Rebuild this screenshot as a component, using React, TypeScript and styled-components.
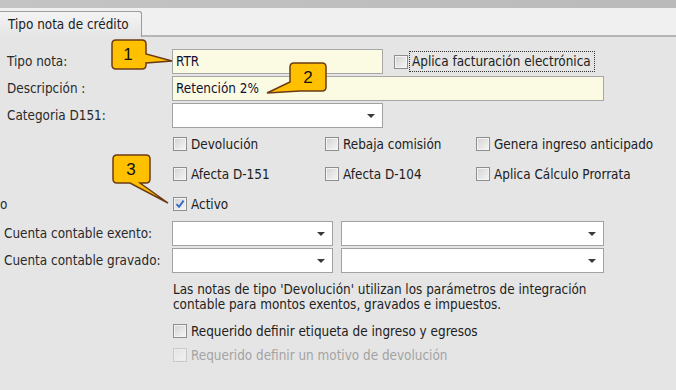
import styled, { createGlobalStyle } from 'styled-components';

const GlobalStyle = createGlobalStyle`
  html, body {
    margin: 0;
    padding: 0;
    background: #e5e5e5;
    overflow: hidden;
  }
  body {
    font-family: Tahoma, "DejaVu Sans", sans-serif;
    font-stretch: condensed;
    font-size: 13.4px;
    color: #1f1f1f;
  }
`;

export default function App() {
  return (
    <>
      <GlobalStyle />
      <Window>
        <TitleStrip />
        <TabStrip>
          <Tab>Tipo nota de crédito</Tab>
        </TabStrip>
        <Panel>
          <Row $h={25}>
            <Label>Tipo nota:</Label>
            <TextInput $w={211}>RTR</TextInput>
            <Check $ml={11}>
              <Box />
              <FocusText>Aplica facturación electrónica</FocusText>
            </Check>
          </Row>
          <Row $h={25} $mt={2}>
            <Label>Descripción :</Label>
            <TextInput $w={432}>Retención 2%</TextInput>
          </Row>
          <Row $h={25} $mt={2}>
            <Label>Categoria D151:</Label>
            <Combo $w={211} />
          </Row>

          <CheckGrid>
            <Check>
              <Box />
              Devolución
            </Check>
            <Check>
              <Box />
              Rebaja comisión
            </Check>
            <Check>
              <Box />
              Genera ingreso anticipado
            </Check>
            <Check>
              <Box />
              Afecta D-151
            </Check>
            <Check>
              <Box />
              Afecta D-104
            </Check>
            <Check>
              <Box />
              Aplica Cálculo Prorrata
            </Check>
          </CheckGrid>

          <Row $h={30}>
            <Label $pl={0}>o</Label>
            <Check $ml={1}>
              <Box $checked>
                <svg width="10" height="10" viewBox="0 0 10 10">
                  <path d="M1.5 5.2 L4 7.8 L8.6 1.6" fill="none" stroke="#2f68c4" strokeWidth="1.8" />
                </svg>
              </Box>
              Activo
            </Check>
          </Row>

          <Row $h={25} $mt={2}>
            <Label $pl={4}>Cuenta contable exento:</Label>
            <Combo $w={161} />
            <Combo $w={263} $ml={8} />
          </Row>
          <Row $h={25} $mt={2}>
            <Label $pl={4}>Cuenta contable gravado:</Label>
            <Combo $w={161} />
            <Combo $w={263} $ml={8} />
          </Row>

          <Note>
            Las notas de tipo 'Devolución' utilizan los parámetros de integración
            <br />
            contable para montos exentos, gravados e impuestos.
          </Note>

          <Row $h={24} $mt={7}>
            <Label />
            <Check $ml={1}>
              <Box />
              Requerido definir etiqueta de ingreso y egresos
            </Check>
          </Row>
          <Row $h={24}>
            <Label />
            <Check $ml={1} $disabled>
              <Box $disabled />
              Requerido definir un motivo de devolución
            </Check>
          </Row>
        </Panel>

        <Callout $left={110} $top={38} width={66} height={34}>
          <path
            d="M6 2 H32 Q36 2 36 6 V16 L62 23 L36 25 V27 Q36 31 32 31 H6 Q2 31 2 27 V6 Q2 2 6 2 Z"
            fill="#ffc000"
            stroke="#6b3a14"
            strokeWidth="1.5"
          />
          <CalloutNum x={18} y={22}>1</CalloutNum>
        </Callout>
        <Callout $left={264} $top={61} width={64} height={34}>
          <path
            d="M30 2 H58 Q62 2 62 6 V26 Q62 30 58 30 H36 L3 32 L26 21 V6 Q26 2 30 2 Z"
            fill="#ffc000"
            stroke="#6b3a14"
            strokeWidth="1.5"
          />
          <CalloutNum x={44} y={22}>2</CalloutNum>
        </Callout>
        <Callout $left={110} $top={152} width={62} height={54}>
          <path
            d="M7 3 H36 Q40 3 40 7 V27 Q40 31 36 31 H30 L58 51 L20 31 H7 Q3 31 3 27 V7 Q3 3 7 3 Z"
            fill="#ffc000"
            stroke="#6b3a14"
            strokeWidth="1.5"
          />
          <CalloutNum x={21} y={23}>3</CalloutNum>
        </Callout>
      </Window>
    </>
  );
}

const Window = styled.div`
  position: relative;
  width: 676px;
  height: 390px;
  background: #e5e5e5;
`;

const TitleStrip = styled.div`
  height: 8px;
  background: linear-gradient(to right, #c4c4c4, #bababa);
`;

const TabStrip = styled.div`
  height: 27px;
  background: #f0f0f0;
  border-bottom: 2px solid #b5b5b5;
  display: flex;
  align-items: flex-end;
`;

const Tab = styled.div`
  height: 25px;
  width: 133px;
  margin-bottom: -2px;
  padding-left: 8px;
  display: flex;
  align-items: center;
  background: linear-gradient(#f4f4f4, #e5e5e5);
  border: 1px solid #9c9c9c;
  border-left: none;
  border-bottom: none;
  border-top-right-radius: 3px;
  color: #202020;
`;

const Panel = styled.div`
  padding-top: 12px;
  display: flex;
  flex-direction: column;
`;

const Row = styled.div<{ $h: number; $mt?: number }>`
  display: flex;
  align-items: center;
  height: ${(p) => p.$h}px;
  margin-top: ${(p) => p.$mt ?? 0}px;
`;

const Label = styled.div<{ $pl?: number }>`
  width: 172px;
  flex-shrink: 0;
  box-sizing: border-box;
  padding-left: ${(p) => p.$pl ?? 7}px;
  color: #2a2a2a;
  white-space: nowrap;
`;

const TextInput = styled.div<{ $w: number }>`
  width: ${(p) => p.$w}px;
  height: 25px;
  box-sizing: border-box;
  border: 1px solid #a7a7a7;
  background: #fbfbe3;
  padding-left: 3px;
  display: flex;
  align-items: center;
  color: #101030;
`;

const Combo = styled.div<{ $w: number; $ml?: number }>`
  width: ${(p) => p.$w}px;
  height: 25px;
  margin-left: ${(p) => p.$ml ?? 0}px;
  box-sizing: border-box;
  border: 1px solid #a2a2a2;
  background: #ffffff;
  display: flex;
  align-items: center;
  justify-content: flex-end;
  padding-right: 7px;
  &::after {
    content: '';
    border-left: 4px solid transparent;
    border-right: 4px solid transparent;
    border-top: 4px solid #3a3a3a;
  }
`;

const Check = styled.div<{ $ml?: number; $disabled?: boolean }>`
  display: flex;
  align-items: center;
  gap: 4px;
  margin-left: ${(p) => p.$ml ?? 0}px;
  white-space: nowrap;
  color: ${(p) => (p.$disabled ? '#a3a3a3' : '#202020')};
`;

const Box = styled.span<{ $checked?: boolean; $disabled?: boolean }>`
  width: 14px;
  height: 14px;
  box-sizing: border-box;
  border: 1px solid ${(p) => (p.$disabled ? '#c9c9c9' : '#8e8e8e')};
  background: ${(p) =>
    p.$disabled
      ? 'linear-gradient(135deg, #e3e3e3, #f1f1f1)'
      : 'linear-gradient(135deg, #d2d2d2, #f7f7f7)'};
  box-shadow: inset 0 0 0 1px ${(p) => (p.$disabled ? '#ececec' : '#f4f4f4')};
  display: flex;
  align-items: center;
  justify-content: center;
  flex-shrink: 0;
`;

const FocusText = styled.span`
  outline: 1px dotted #333;
  outline-offset: 2px;
  padding-right: 1px;
`;

const CheckGrid = styled.div`
  margin-left: 173px;
  display: grid;
  grid-template-columns: 152px 151px auto;
  grid-auto-rows: 30px;
  margin-top: 1px;
  align-items: center;
`;

const Note = styled.div`
  margin: 9px 0 0 173px;
  line-height: 15px;
  color: #222;
`;

const Callout = styled.svg<{ $left: number; $top: number }>`
  position: absolute;
  left: ${(p) => p.$left}px;
  top: ${(p) => p.$top}px;
  overflow: visible;
`;

const CalloutNum = styled.text`
  font-family: 'Liberation Sans', Arial, sans-serif;
  font-stretch: normal;
  font-size: 17px;
  text-anchor: middle;
  fill: #111;
`;
